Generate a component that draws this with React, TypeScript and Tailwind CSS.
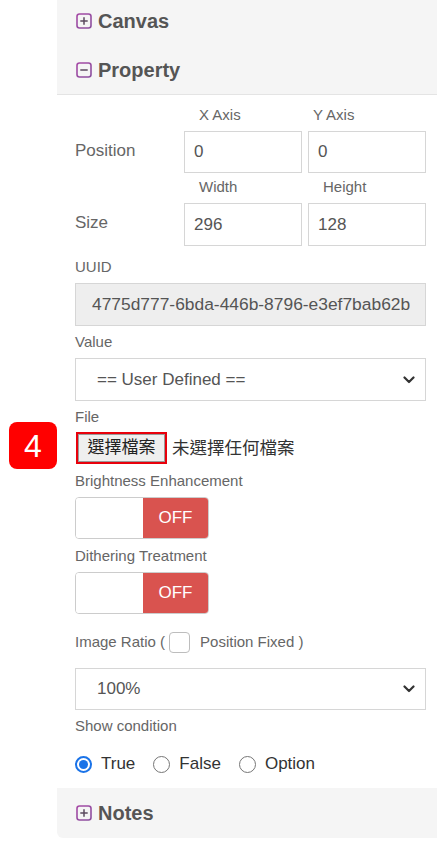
import React from "react";

const font = { fontFamily: '"Liberation Sans", Arial, sans-serif' };
const cjk = { fontFamily: '"Liberation Sans", "Noto Sans CJK TC", sans-serif' };

function BoxIcon({ minus }: { minus?: boolean }) {
  return (
    <svg width="16" height="16" viewBox="0 0 16 16" className="shrink-0">
      <defs>
        <linearGradient id={minus ? "gm" : "gp"} x1="0" y1="0" x2="1" y2="1">
          <stop offset="0" stopColor="#a64aa6" />
          <stop offset="1" stopColor="#8a4f9e" />
        </linearGradient>
      </defs>
      <rect x="1" y="1" width="14" height="14" rx="2.5" fill="none" stroke={`url(#${minus ? "gm" : "gp"})`} strokeWidth="1.6" />
      <line x1="4.3" y1="8" x2="11.7" y2="8" stroke="#5a4a5e" strokeWidth="1.5" />
      {!minus && <line x1="8" y1="4.3" x2="8" y2="11.7" stroke="#5a4a5e" strokeWidth="1.5" />}
    </svg>
  );
}

function Chevron() {
  return (
    <svg width="12" height="8" viewBox="0 0 12 8" className="absolute right-[10px] top-1/2 -translate-y-1/2">
      <path d="M1.5 1.5 L6 6 L10.5 1.5" fill="none" stroke="#333" strokeWidth="2.2" strokeLinecap="round" strokeLinejoin="round" />
    </svg>
  );
}

function Toggle() {
  return (
    <div className="flex w-[134px] h-[42px] rounded-[4px] border border-[#ccc] overflow-hidden">
      <div className="w-[67px] bg-white" />
      <div className="flex-1 bg-[#d9534f] flex items-center justify-center text-white text-[17px]">OFF</div>
    </div>
  );
}

function Radio({ checked, label }: { checked?: boolean; label: string }) {
  return (
    <div className="flex items-center gap-[9px]">
      {checked ? (
        <div className="w-[17px] h-[17px] rounded-full border-[2px] border-[#1a73e8] flex items-center justify-center">
          <div className="w-[9px] h-[9px] rounded-full bg-[#1a73e8]" />
        </div>
      ) : (
        <div className="w-[17px] h-[17px] rounded-full border-[1.5px] border-[#767676] bg-white" />
      )}
      <span className="text-[17px] text-[#333]">{label}</span>
    </div>
  );
}

export default function App() {
  const lbl = "text-[15px] text-[#666] h-[20px] leading-[20px]";
  const box = "border border-[#d6d6d6] flex items-center text-[17px] text-[#555]";
  return (
    <div className="w-[437px] h-[844px] bg-white relative overflow-hidden" style={font}>
      <div className="ml-[57px]">
        <div className="bg-[#f5f5f5] border-b border-[#e4e4e4]">
          <div className="flex items-center gap-[6px] h-[42px] pl-[19px]">
            <BoxIcon />
            <span className="text-[20px] font-bold text-[#555]">Canvas</span>
          </div>
          <div className="flex items-center gap-[6px] h-[52px] pt-[4px] pl-[19px]">
            <BoxIcon minus />
            <span className="text-[20px] font-bold text-[#555]">Property</span>
          </div>
        </div>

        <div className="pl-[18px] pr-[11px] flex flex-col pt-[10px]">
          <div className="grid grid-cols-[103px_1fr_1fr] gap-x-[6px]">
            <div />
            <div className={lbl + " pl-[15px]"}>X Axis</div>
            <div className={lbl + " pl-[5px]"}>Y Axis</div>
            <div className="flex items-center text-[17px] text-[#666] mt-[6px] pb-[3px]">Position</div>
            <div className={box + " bg-white h-[42px] px-[9px] mt-[6px]"}>0</div>
            <div className={box + " bg-white h-[42px] px-[9px] mt-[6px]"}>0</div>
            <div />
            <div className={lbl + " pl-[15px] mt-[4px]"}>Width</div>
            <div className={lbl + " pl-[15px] mt-[4px]"}>Height</div>
            <div className="flex items-center text-[17px] text-[#666] mt-[6px] pb-[3px]">Size</div>
            <div className={box + " bg-white h-[43px] px-[9px] mt-[6px]"}>296</div>
            <div className={box + " bg-white h-[43px] px-[9px] mt-[6px]"}>128</div>
          </div>

          <div className={lbl + " mt-[11px]"}>UUID</div>
          <div className={box + " bg-[#eeeeee] h-[43px] mt-[6px] pl-[16px] pr-[15px]"}>
            <div className="overflow-hidden whitespace-nowrap text-[17.4px]">4775d777-6bda-446b-8796-e3ef7bab62b1</div>
          </div>

          <div className={lbl + " mt-[6px]"}>Value</div>
          <div className={box + " bg-white h-[43px] mt-[6px] relative pl-[21px] text-[#444]"}>
            == User Defined ==
            <Chevron />
          </div>

          <div className={lbl + " mt-[6px]"}>File</div>
          <div className="flex items-center mt-[5px] h-[32px]" style={cjk}>
            <div className="ml-[1px] h-[32px] w-[91px] border-[2px] border-[#e8000b] flex">
              <div className="flex-1 bg-[#efefef] border border-[#9a9a9a] flex items-center justify-center text-[17px] text-[#222]">
                選擇檔案
              </div>
            </div>
            <span className="ml-[5px] text-[17.5px] text-[#333]">未選擇任何檔案</span>
          </div>

          <div className={lbl + " mt-[7px]"}>Brightness Enhancement</div>
          <div className="mt-[6px]"><Toggle /></div>

          <div className={lbl + " mt-[7px]"}>Dithering Treatment</div>
          <div className="mt-[6px]"><Toggle /></div>

          <div className="flex items-center mt-[17px] h-[22px] text-[15px] text-[#666]">
            <span>Image Ratio (</span>
            <div className="ml-[4px] w-[21px] h-[21px] rounded-[4px] border border-[#bdbdbd] bg-white" />
            <span className="ml-[10px]">Position Fixed )</span>
          </div>

          <div className={box + " bg-white h-[42px] mt-[15px] relative pl-[21px] text-[#444]"}>
            100%
            <Chevron />
          </div>

          <div className={lbl + " mt-[6px]"}>Show condition</div>

          <div className="flex items-center gap-[18px] mt-[18px] h-[20px]">
            <Radio checked label="True" />
            <Radio label="False" />
            <Radio label="Option" />
          </div>
        </div>

        <div className="mt-[14px] bg-[#f5f5f5] rounded-bl-[6px] h-[50px] flex items-center">
          <div className="flex items-center gap-[6px] pl-[19px]">
            <BoxIcon />
            <span className="text-[20px] font-bold text-[#555]">Notes</span>
          </div>
        </div>
      </div>

      <div className="absolute left-[9px] top-[422px] w-[48px] h-[47px] rounded-[8px] bg-[#ff0000] flex items-center justify-center text-white text-[32px]">
        4
      </div>
    </div>
  );
}
